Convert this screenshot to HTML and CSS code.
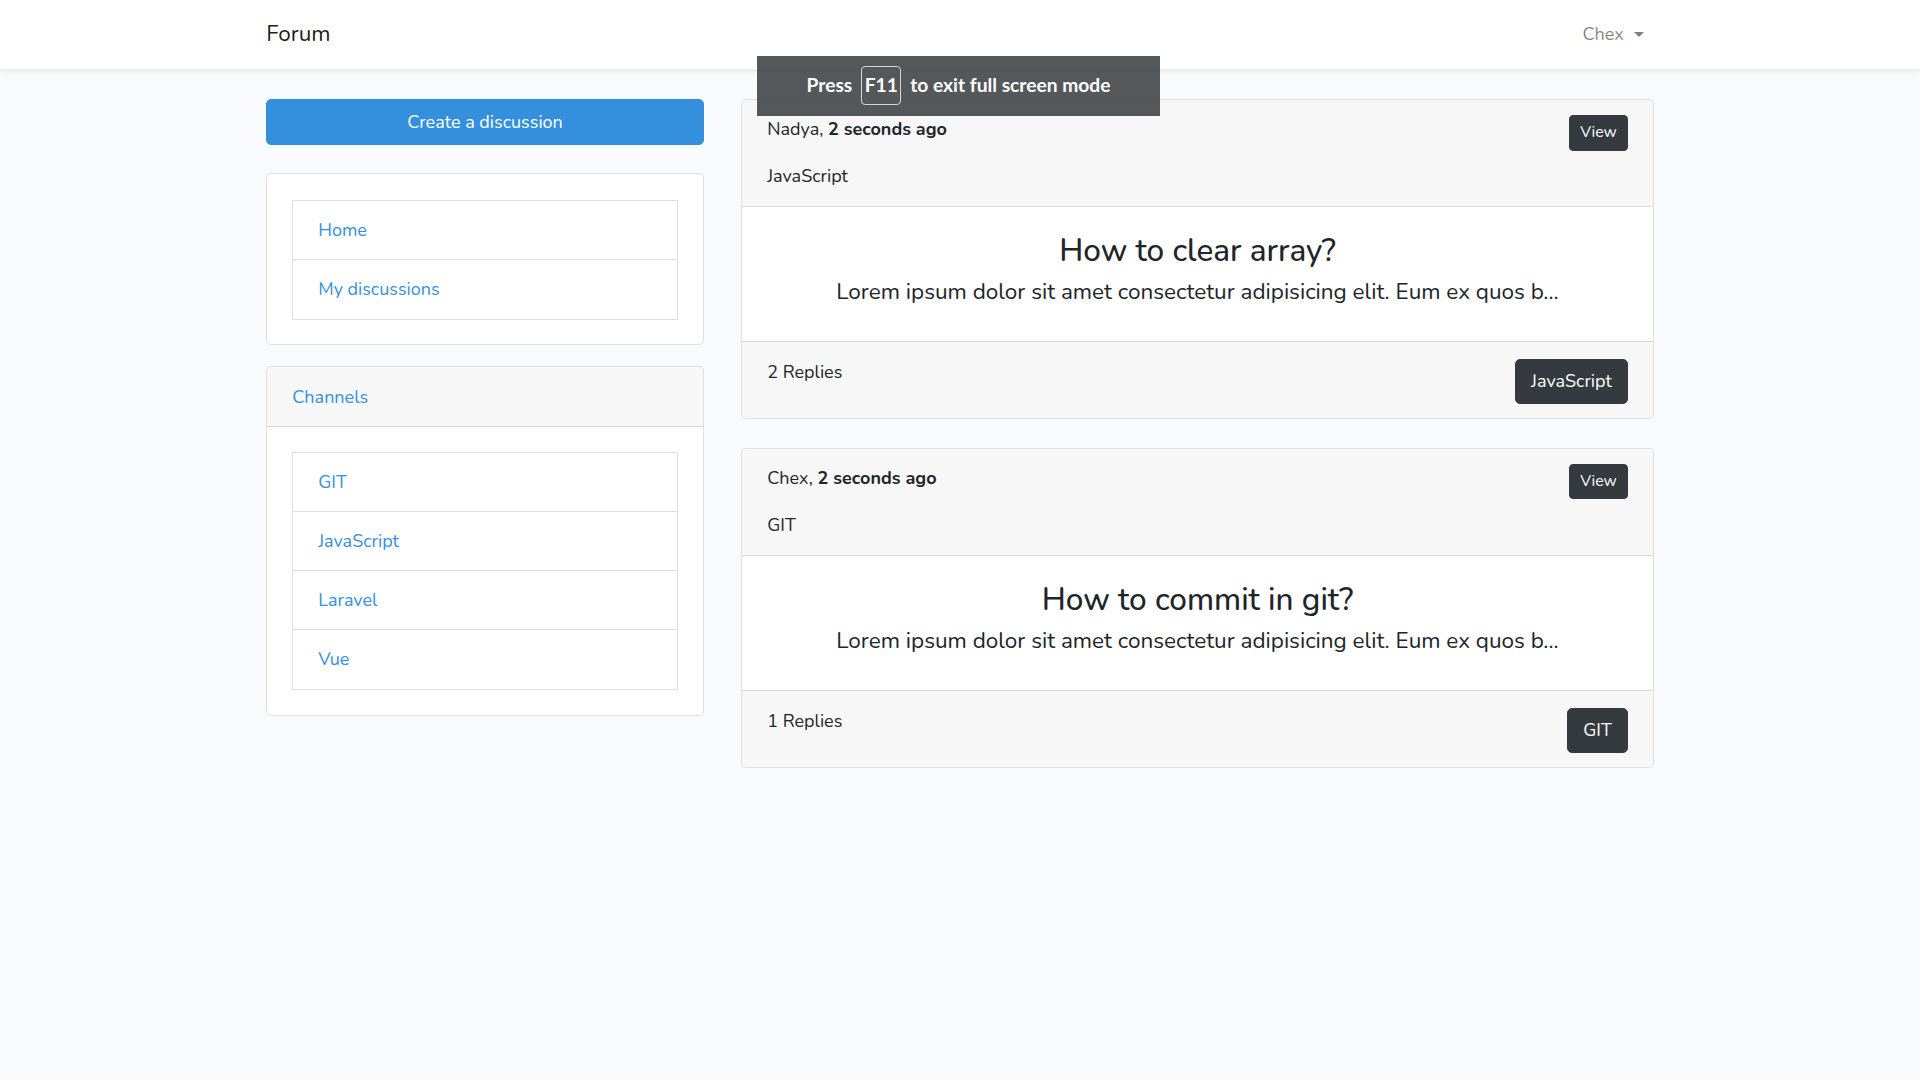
FILE: index.html
```html
<!DOCTYPE html>
<html lang="en">
<head>
<meta charset="utf-8">
<title>Forum</title>
<link rel="stylesheet" href="styles.css">
</head>
<body>
<nav class="navbar">
  <div class="container nav-inner">
    <a class="brand" href="#">Forum</a>
    <a class="user" href="#">Chex<span class="caret"></span></a>
  </div>
</nav>

<main class="main">
  <div class="container layout">
    <aside class="sidebar">
      <a class="btn btn-primary btn-block" href="#">Create a discussion</a>

      <div class="card card-nav">
        <div class="card-body">
          <ul class="list-group">
            <li class="list-item"><a href="#">Home</a></li>
            <li class="list-item"><a href="#">My discussions</a></li>
          </ul>
        </div>
      </div>

      <div class="card card-channels">
        <div class="card-header"><a href="#">Channels</a></div>
        <div class="card-body">
          <ul class="list-group">
            <li class="list-item"><a href="#">GIT</a></li>
            <li class="list-item"><a href="#">JavaScript</a></li>
            <li class="list-item"><a href="#">Laravel</a></li>
            <li class="list-item"><a href="#">Vue</a></li>
          </ul>
        </div>
      </div>
    </aside>

    <section class="discussions">
      <article class="card disc">
        <div class="card-header disc-header">
          <div class="disc-top">
            <span class="disc-meta">Nadya, <b>2 seconds ago</b></span>
            <a class="btn btn-dark btn-sm" href="#">View</a>
          </div>
          <div class="disc-channel">JavaScript</div>
        </div>
        <div class="card-body disc-body">
          <h3 class="disc-title">How to clear array?</h3>
          <p class="disc-text">Lorem ipsum dolor sit amet consectetur adipisicing elit. Eum ex quos b...</p>
        </div>
        <div class="card-footer disc-footer">
          <span>2 Replies</span>
          <a class="btn btn-dark" href="#">JavaScript</a>
        </div>
      </article>

      <article class="card disc">
        <div class="card-header disc-header">
          <div class="disc-top">
            <span class="disc-meta">Chex, <b>2 seconds ago</b></span>
            <a class="btn btn-dark btn-sm" href="#">View</a>
          </div>
          <div class="disc-channel">GIT</div>
        </div>
        <div class="card-body disc-body">
          <h3 class="disc-title">How to commit in git?</h3>
          <p class="disc-text">Lorem ipsum dolor sit amet consectetur adipisicing elit. Eum ex quos b...</p>
        </div>
        <div class="card-footer disc-footer">
          <span>1 Replies</span>
          <a class="btn btn-dark" href="#">GIT</a>
        </div>
      </article>
    </section>
  </div>
</main>

<div class="fs-bubble">
  <span>Press</span><kbd class="fs-key">F11</kbd><span>to exit full screen mode</span>
</div>
</body>
</html>
```

FILE: styles.css
```css
* { box-sizing: border-box; }

html, body {
  margin: 0;
  padding: 0;
}

body {
  background: #f8fafc;
  color: #212529;
  font-family: "Nunito", "Lato", "Noto Sans", sans-serif;
  font-size: 18px;
  line-height: 28.8px;
  min-height: 1080px;
}

a { text-decoration: none; color: #3490dc; }

.container {
  width: 1387.5px;
  margin: 0 auto;
}

/* navbar */
.navbar {
  background: #fff;
  height: 68.5px;
  box-shadow: 0 2.5px 5px rgba(0, 0, 0, 0.075);
  position: relative;
  z-index: 1;
}

.nav-inner {
  height: 100%;
  display: flex;
  align-items: center;
  justify-content: space-between;
}

.brand {
  color: rgba(0, 0, 0, 0.9);
  font-size: 22.5px;
}

.user {
  color: rgba(0, 0, 0, 0.5);
  font-size: 18px;
  padding-right: 10px;
  display: flex;
  align-items: center;
}

.caret {
  display: inline-block;
  margin-left: 10px;
  width: 0;
  height: 0;
  border-top: 5.4px solid rgba(0, 0, 0, 0.5);
  border-left: 5.4px solid transparent;
  border-right: 5.4px solid transparent;
  margin-top: 1px;
}

/* layout */
.main {
  padding-top: 30.5px;
}

.layout {
  display: grid;
  grid-template-columns: 437.5px 912.5px;
  column-gap: 37.5px;
  align-items: start;
}

/* buttons */
.btn {
  display: inline-block;
  border: 1px solid transparent;
  border-radius: 5px;
  padding: 7.5px 15px;
  font-size: 18px;
  line-height: 28.8px;
  text-align: center;
  white-space: nowrap;
}

.btn-primary {
  background: #3490dc;
  border-color: #3490dc;
  color: #fff;
}

.btn-block {
  display: block;
  width: 100%;
}

.btn-dark {
  background: #343a40;
  border-color: #343a40;
  color: #fff;
}

.btn-sm {
  padding: 5px 10px;
  font-size: 15.75px;
  line-height: 23.6px;
  border-radius: 4px;
}

/* cards */
.card {
  background: #fff;
  border: 1px solid rgba(0, 0, 0, 0.125);
  border-radius: 5px;
  overflow: hidden;
}

.card-header {
  background: rgba(0, 0, 0, 0.03);
  border-bottom: 1px solid rgba(0, 0, 0, 0.125);
  padding: 15px 25px;
}

.card-body {
  padding: 25px;
}

.card-footer {
  background: rgba(0, 0, 0, 0.03);
  border-top: 1px solid rgba(0, 0, 0, 0.125);
  padding: 15px 25px;
}

/* sidebar */
.card-nav {
  margin-top: 28.5px;
}

.card-nav .card-body {
  padding: 26px 25px 24px;
}

.card-channels {
  margin-top: 21px;
}

.card-channels .card-header {
  padding: 16px 25px 15px;
}

.card-channels .card-body {
  padding: 24.5px 25px 25px;
}

.list-group {
  list-style: none;
  margin: 0;
  padding: 0;
  border: 1px solid rgba(0, 0, 0, 0.125);
}

.list-item {
  padding: 14.7px 25px;
  background: #fff;
}

.list-item + .list-item {
  border-top: 1px solid rgba(0, 0, 0, 0.125);
}

.list-item a {
  color: #3490dc;
}

/* discussions */
.disc {
  margin-bottom: 28.5px;
}

.disc-top {
  display: flex;
  justify-content: space-between;
  align-items: flex-start;
}

.disc-meta b {
  font-weight: 700;
}

.disc-channel {
  margin-top: 11.5px;
}

.disc-body {
  text-align: center;
  padding: 25.5px 25px 26px;
}

.disc-title {
  margin: 0 0 4px;
  font-size: 31.5px;
  line-height: 37.8px;
  font-weight: 500;
}

.disc-text {
  margin: 0 0 5px;
  font-size: 22.5px;
  line-height: 36px;
}

.disc-footer {
  display: flex;
  justify-content: space-between;
  align-items: flex-start;
  padding: 16.3px 25px 14.5px;
}

.disc-footer .btn {
  margin-top: 0.5px;
  padding-top: 7px;
  padding-bottom: 7px;
}

/* fullscreen bubble (browser overlay) */
.fs-bubble {
  position: absolute;
  left: 757px;
  top: 56px;
  width: 403px;
  height: 60px;
  background: rgba(72, 75, 79, 0.93);
  color: #fff;
  font-family: "Lato", "Noto Sans", sans-serif;
  font-weight: 700;
  font-size: 19.2px;
  display: flex;
  align-items: center;
  justify-content: center;
  gap: 9px;
  padding-bottom: 1px;
  z-index: 10;
}

.fs-key {
  font-family: inherit;
  font-size: 19.2px;
  font-weight: 700;
  width: 40px;
  height: 39px;
  border: 1.5px solid rgba(255, 255, 255, 0.75);
  border-radius: 4px;
  display: flex;
  align-items: center;
  justify-content: center;
}
```
